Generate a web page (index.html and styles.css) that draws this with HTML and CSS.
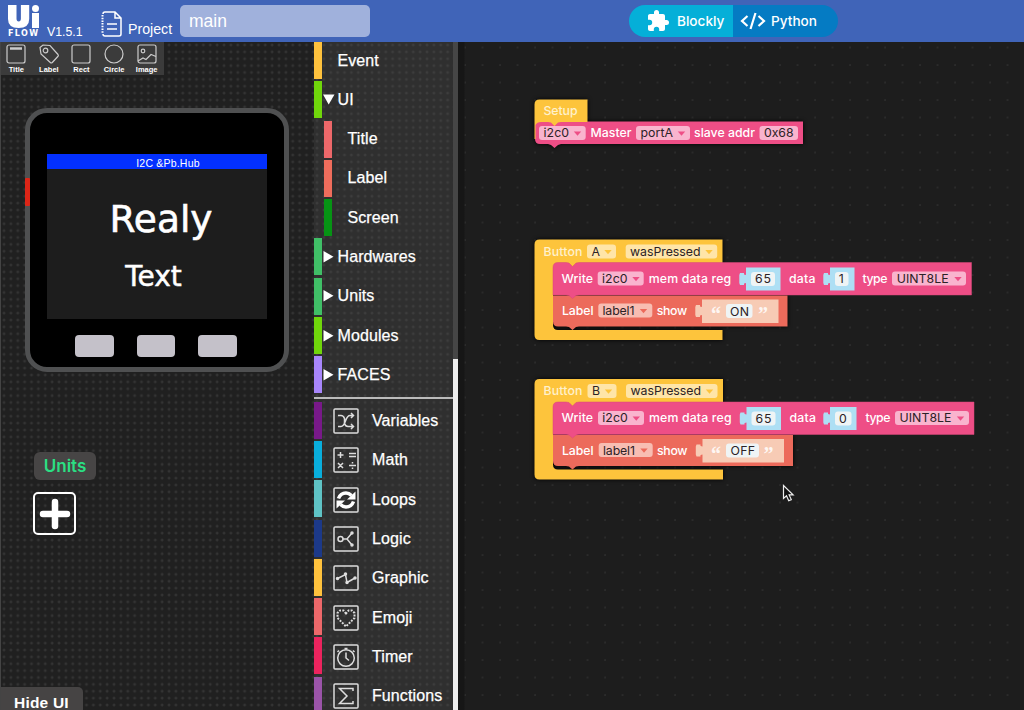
FILE: index.html
```
<!DOCTYPE html>
<html lang="en">
<head>
<meta charset="utf-8">
<title>UiFlow</title>
<link rel="stylesheet" href="styles.css">
</head>
<body>
<header class="topbar">
  <div class="logo">
    <svg class="logo-mark" width="32" height="24" viewBox="0 0 32 24" fill="#fff"><path d="M0 0h8.500v13.500q0 3 2.200 3t2.200-3V0h8.300v14q0 9-10.600 9T0 14zM24 8h7v15h-7z"/><circle cx="27.500" cy="3.500" r="3.500"/></svg>
    <span class="logo-sub">FLOW</span>
  </div>
  <span class="version">V1.5.1</span>
  <svg class="doc" width="22" height="27" viewBox="0 0 22 27" fill="none" stroke="#fff" stroke-width="1.500"><path d="M2 3q0-2 2-2h10l6 6v16q0 2-2 2H4q-2 0-2-2M14 1v6h6M6 13h10M6 18h10"/><path d="M1.500 4v19" stroke-dasharray="1.500 1.200" stroke-width="2"/></svg>
  <span class="project">Project</span>
  <div class="name">main</div>
  <div class="switch">
    <div class="mode blockly"><svg width="24" height="24" viewBox="0 0 24 24" fill="#fff"><path d="M20.500 11H19V7c0-1.100-.9-2-2-2h-4V3.500a2.500 2.500 0 0 0-5 0V5H4c-1.100 0-2 .9-2 2v3.800h1.500a2.700 2.700 0 0 1 0 5.400H2V20c0 1.100.9 2 2 2h3.800v-1.500a2.700 2.700 0 0 1 5.400 0V22H17c1.100 0 2-.9 2-2v-4h1.500a2.500 2.500 0 0 0 0-5z"/></svg><span>Blockly</span></div>
    <div class="mode python"><svg width="26" height="18" viewBox="0 0 26 18" fill="none" stroke="#fff" stroke-width="2.200"><path d="M7.500 4L2 9l5.500 5M18.500 4L24 9l-5.500 5M15.500 1l-5 16"/></svg><span>Python</span></div>
  </div>
</header>
<main class="work">
  <section class="designer">
    <nav class="tools">
      <div class="tool"><svg viewBox="0 0 20 20"><rect x="1" y="1" width="18" height="18" rx="2"/><path d="M4 4.500h12" stroke-width="2.500"/></svg>Title</div>
      <div class="tool"><svg viewBox="0 0 20 20"><path d="M1 3.500L4 1l7 .5 8 9q.8 1-.2 2l-5.500 6q-1 .9-2 0L2 10z"/><circle cx="6.500" cy="6.500" r="2.300"/></svg>Label</div>
      <div class="tool"><svg viewBox="0 0 20 20"><rect x="1" y="1" width="18" height="18" rx="2"/></svg>Rect</div>
      <div class="tool"><svg viewBox="0 0 20 20"><circle cx="10" cy="10" r="9"/></svg>Circle</div>
      <div class="tool"><svg viewBox="0 0 20 20"><rect x="1" y="1" width="18" height="18" rx="2"/><circle cx="6" cy="7" r="1.800"/><path d="M1 17l5-3 3 1.500 5-5 5 2"/></svg>Image</div>
    </nav>
    <div class="device">
      <i class="power"></i>
      <div class="screen">
        <div class="screen-title">I2C &amp;Pb.Hub</div>
        <div class="big">Realy</div>
        <div class="small">Text</div>
      </div>
      <div class="keys"><i></i><i></i><i></i></div>
    </div>
    <div class="units">Units</div>
    <div class="add"><svg width="32" height="32" viewBox="0 0 32 32" stroke="#fff" stroke-width="6.500" stroke-linecap="round"><path d="M16 4v24M4 16h24"/></svg></div>
    <div class="hide">Hide UI</div>
  </section>
  <aside class="toolbox">
    <div class="cats">
      <div class="cat"><b class="c-gold"></b><span class="arrow"></span>Event</div>
      <div class="cat"><b class="c-lime"></b><span class="arrow"><svg width="12" height="12" viewBox="0 0 12 12"><path d="M0 .5h11.500L5.700 10.500z" fill="#fff"/></svg></span>UI</div>
      <div class="cat sub"><b class="c-coral"></b><span class="arrow"></span>Title</div>
      <div class="cat sub"><b class="c-orange"></b><span class="arrow"></span>Label</div>
      <div class="cat sub"><b class="c-forest"></b><span class="arrow"></span>Screen</div>
      <div class="cat"><b class="c-green"></b><span class="arrow"><svg width="12" height="12" viewBox="0 0 12 12"><path d="M.5 0v11.500L10.500 5.700z" fill="#fff"/></svg></span>Hardwares</div>
      <div class="cat"><b class="c-green"></b><span class="arrow"><svg width="12" height="12" viewBox="0 0 12 12"><path d="M.5 0v11.500L10.500 5.700z" fill="#fff"/></svg></span>Units</div>
      <div class="cat"><b class="c-lime"></b><span class="arrow"><svg width="12" height="12" viewBox="0 0 12 12"><path d="M.5 0v11.500L10.500 5.700z" fill="#fff"/></svg></span>Modules</div>
      <div class="cat"><b class="c-violet"></b><span class="arrow"><svg width="12" height="12" viewBox="0 0 12 12"><path d="M.5 0v11.500L10.500 5.700z" fill="#fff"/></svg></span>FACES</div>
      <hr class="rule">
      <div class="cat"><b class="c-purple"></b><svg class="icon" viewBox="0 0 26 26"><rect x="1" y="1" width="24" height="24" rx="1"/><path d="M5 7.500h3q2.500 0 3.500 3v5q1 3 3.500 3h5M5 18.500h3q2.500 0 4.500-5.500t4.500-5.500h3M18 5l2.500 2.500L18 10M18 16l2.500 2.500L18 21"/></svg><span class="label">Variables</span></div>
      <div class="cat"><b class="c-cyan"></b><svg class="icon" viewBox="0 0 26 26"><rect x="1" y="1" width="24" height="24" rx="1"/><path d="M4.500 8h6M7.500 5v6M16 6.500h7M16 9.500h7M5 16l5 5M10 16l-5 5M16 18.500h7M19.500 15v1.500M19.500 20.500V22"/></svg><span class="label">Math</span></div>
      <div class="cat"><b class="c-aqua"></b><svg class="icon" viewBox="0 0 26 26"><rect x="1" y="1" width="24" height="24" rx="1"/><path d="M5.500 11.500q2-5.500 7.500-5.500 3 0 5.500 2.500M20.500 14.500q-2 5.500-7.500 5.500-3 0-5.500-2.500" stroke="#fff" stroke-width="3.500"/><path d="M22.500 4.500v8h-8.500zM3.500 21.500v-8H12z" fill="#fff" stroke="none"/></svg><span class="label">Loops</span></div>
      <div class="cat"><b class="c-navy"></b><svg class="icon" viewBox="0 0 26 26"><rect x="1" y="1" width="24" height="24" rx="1"/><circle cx="7.500" cy="13" r="2.500"/><path d="M10 13h4l5-6M14 13l5 6"/><circle cx="19" cy="7" r="1" fill="#fff"/><circle cx="19" cy="19" r="1" fill="#fff"/></svg><span class="label">Logic</span></div>
      <div class="cat"><b class="c-gold"></b><svg class="icon" viewBox="0 0 26 26"><rect x="1" y="1" width="24" height="24" rx="1"/><path d="M4.500 13.500l8-4 1.500 8 8-4.500"/><g fill="#fff"><circle cx="4.500" cy="13.500" r="1"/><circle cx="12.500" cy="9" r="1"/><circle cx="14" cy="17.500" r="1"/><circle cx="22" cy="13" r="1"/></g></svg><span class="label">Graphic</span></div>
      <div class="cat"><b class="c-coral"></b><svg class="icon" viewBox="0 0 26 26"><rect x="1" y="1" width="24" height="24" rx="1"/><path d="M13 8.500L10.500 5.500H7L4.500 8v5L13 21.500 21.500 13V8L19 5.500h-3.500z" stroke-width="2" stroke-dasharray="1.900 1.300"/></svg><span class="label">Emoji</span></div>
      <div class="cat"><b class="c-rose"></b><svg class="icon" viewBox="0 0 26 26"><rect x="1" y="1" width="24" height="24" rx="1"/><circle cx="13" cy="14" r="8.300"/><path d="M13 8.500V14l3 2.500M11.500 4.500h3M6 6.500L4.500 8M20 6.500L21.500 8"/></svg><span class="label">Timer</span></div>
      <div class="cat"><b class="c-plum"></b><svg class="icon" viewBox="0 0 26 26"><rect x="1" y="1" width="24" height="24" rx="1"/><path d="M20 8V5.500H6.500L14 13l-7.500 7.500H20V18"/></svg><span class="label">Functions</span></div>
    </div>
    <div class="scroll"><div class="thumb"></div></div>
  </aside>
  <section class="canvas">
    <svg class="blocks" width="566" height="668" viewBox="458 42 566 668">
      <defs>
        <path id="dd" d="M-3.700-2h7.400L0 2.200z"/>
      </defs>
      <g class="shade">
        <path class="pink" d="M535 121.500H803V144H561l-3 1-3.500 3-3.500-3-3-1H540q-5 0-5-5z"/>
        <path class="yellow" d="M534.500 104.500q0-5 5-5H587.500V122H561l-3 .5-3.500 3.500-3.500-3.500-3-.5h-7q-4 0-5.500 3v14h-1z"/>
      </g>
      <rect class="f-pink" x="539" y="126" width="46.700" height="14" rx="3"/>
      <rect class="f-pink" x="636" y="126" width="54" height="14" rx="3"/>
      <rect class="f-pink" x="759.500" y="126" width="38.500" height="14" rx="3"/>
      <use href="#dd" class="pink" x="577.500" y="133.500"/><use href="#dd" class="pink" x="681.500" y="133.500"/>
      <text class="pale" x="543.500" y="115.300" textLength="34">Setup</text>
      <text class="ink" x="543.500" y="137.300" textLength="25.500">i2c0</text>
      <text x="590.500" y="137.300" textLength="41">Master</text>
      <text class="ink" x="640.500" y="137.300" textLength="32.500">portA</text>
      <text x="694" y="137.300" textLength="61">slave addr</text>
      <text class="ink" x="764" y="137.300" textLength="29.500">0x68</text>

      <g class="shade">
        <path class="yellow" d="M534.500 244.500q0-5 5-5H722.500V268H553V325q0 5 5 5H722.500V340H539.500q-5 0-5-5z"/>
        <path class="red" d="M553 295.500H787.500V326.500H579l-3 .5-3.500 3-3.500-3-3-.5h-8q-5 0-5-5z"/>
      </g>
      <path class="pink edge" d="M553 267.500q0-5 5-5h8l3 .5 3.500 3.500 3.500-3.500 3-.5H971.500V295H579l-3 .5-3.500 3-3.500-3-3-.5H553z"/>
      <rect class="f-yellow" x="587" y="244.500" width="29" height="14" rx="3"/>
      <rect class="f-yellow" x="625.700" y="244.500" width="91.500" height="14" rx="3"/>
      <use href="#dd" class="yellow" x="608" y="252"/><use href="#dd" class="yellow" x="709" y="252"/>
      <rect class="f-pink" x="597.700" y="271.500" width="46" height="14" rx="3"/>
      <rect class="f-pink" x="892" y="271.500" width="74" height="14" rx="3"/>
      <use href="#dd" class="pink" x="636" y="279"/><use href="#dd" class="pink" x="958" y="279"/>
      <path class="blue" d="M746 267.500H780.500V290.500H746V283l-2 .5v1.500h-4l-.7-2v-8l.7-2h4v1.500l2 .5z"/>
      <path class="blue" d="M830 267.500H854.500V290.500H830V283l-2 .5v1.500h-4l-.7-2v-8l.7-2h4v1.500l2 .5z"/>
      <rect class="f-blue" x="751" y="272" width="24" height="14" rx="3"/>
      <rect class="f-blue" x="835" y="272" width="13.500" height="14" rx="3"/>
      <rect class="f-red" x="598.300" y="303.500" width="54" height="14" rx="3"/>
      <use href="#dd" class="red" x="643.500" y="311"/>
      <path class="peach" d="M702 299.500H778.500V323H702V315l-2 .5v1.500h-4l-.7-2v-8l.7-2h4v1.500l2 .5z"/>
      <rect class="f-blue" x="726" y="304" width="26.500" height="14" rx="3"/>
      <text class="pale" x="543.500" y="255.500" textLength="39">Button</text>
      <text class="ink" x="591.500" y="255.500">A</text>
      <text class="ink" x="630" y="255.500" textLength="70.500">wasPressed</text>
      <text x="561.500" y="282.700" textLength="31.500">Write</text>
      <text class="ink" x="602" y="282.700" textLength="25.500">i2c0</text>
      <text x="648.700" y="282.700" textLength="82.500">mem data reg</text>
      <text class="ink" x="755" y="283.300" textLength="16">65</text>
      <text x="789" y="282.700" textLength="26.500">data</text>
      <text class="ink" x="838.800" y="283.300">1</text>
      <text x="862.500" y="282.700" textLength="25">type</text>
      <text class="ink" x="896.700" y="282.700" textLength="52">UINT8LE</text>
      <text x="562" y="315" textLength="31.500">Label</text>
      <text class="ink" x="602.500" y="315" textLength="32">label1</text>
      <text x="656.700" y="315" textLength="30.500">show</text>
      <text class="quote" x="711" y="321">“</text>
      <text class="ink" x="730" y="315.500" textLength="19">ON</text>
      <text class="quote" x="758" y="321">”</text>

      <g transform="translate(0 139.500)">
        <g class="shade">
          <path class="yellow" d="M534.500 244.500q0-5 5-5H723V268H553V325q0 5 5 5H723V340H539.500q-5 0-5-5z"/>
          <path class="red" d="M553 295.500H793V326.500H579l-3 .5-3.500 3-3.500-3-3-.5h-8q-5 0-5-5z"/>
        </g>
        <path class="pink edge" d="M553 267.500q0-5 5-5h8l3 .5 3.500 3.500 3.500-3.500 3-.5H974V295H579l-3 .5-3.500 3-3.500-3-3-.5H553z"/>
        <rect class="f-yellow" x="587.500" y="244.500" width="29" height="14" rx="3"/>
        <rect class="f-yellow" x="626" y="244.500" width="91.500" height="14" rx="3"/>
        <use href="#dd" class="yellow" x="608.500" y="252"/><use href="#dd" class="yellow" x="709.500" y="252"/>
        <rect class="f-pink" x="598" y="271.500" width="46" height="14" rx="3"/>
        <rect class="f-pink" x="895" y="271.500" width="74" height="14" rx="3"/>
        <use href="#dd" class="pink" x="636.300" y="279"/><use href="#dd" class="pink" x="960.500" y="279"/>
        <path class="blue" d="M746.500 267.500H781V290.500H746.500V283l-2 .5v1.500h-4l-.7-2v-8l.7-2h4v1.500l2 .5z"/>
        <path class="blue" d="M830 267.500H856.500V290.500H830V283l-2 .5v1.500h-4l-.7-2v-8l.7-2h4v1.500l2 .5z"/>
        <rect class="f-blue" x="751.500" y="272" width="24" height="14" rx="3"/>
        <rect class="f-blue" x="835" y="272" width="16.500" height="14" rx="3"/>
        <rect class="f-red" x="598.700" y="303.500" width="54" height="14" rx="3"/>
        <use href="#dd" class="red" x="644" y="311"/>
        <path class="peach" d="M702.500 299.500H784V323H702.500V315l-2 .5v1.500h-4l-.7-2v-8l.7-2h4v1.500l2 .5z"/>
        <rect class="f-blue" x="726" y="304" width="33" height="14" rx="3"/>
        <text class="pale" x="543.500" y="255.500" textLength="39">Button</text>
        <text class="ink" x="592" y="255.500">B</text>
        <text class="ink" x="630.500" y="255.500" textLength="70.500">wasPressed</text>
        <text x="561.500" y="282.700" textLength="31.500">Write</text>
        <text class="ink" x="602.300" y="282.700" textLength="25.500">i2c0</text>
        <text x="649" y="282.700" textLength="82.500">mem data reg</text>
        <text class="ink" x="755.500" y="283.300" textLength="16">65</text>
        <text x="789.500" y="282.700" textLength="26.500">data</text>
        <text class="ink" x="839" y="283.300">0</text>
        <text x="865.500" y="282.700" textLength="25">type</text>
        <text class="ink" x="899.500" y="282.700" textLength="52">UINT8LE</text>
        <text x="562" y="315" textLength="31.500">Label</text>
        <text class="ink" x="603" y="315" textLength="32">label1</text>
        <text x="657" y="315" textLength="30.500">show</text>
        <text class="quote" x="711" y="321">“</text>
        <text class="ink" x="730.500" y="315.500" textLength="24.500">OFF</text>
        <text class="quote" x="763.500" y="321">”</text>
      </g>
      <path d="M783.500 485.500v13l3-2.700 2.200 5 2.600-1.200-2.200-4.700h4z" fill="#111" stroke="#eee" stroke-width="1.200"/>
    </svg>
  </section>
</main>
</body>
</html>
```
FILE: styles.css
```
* { box-sizing: border-box; }
body { margin: 0; width: 1024px; height: 710px; overflow: hidden; background: #1d1d1d; color: #fff; font-family: "Liberation Sans", Arial, sans-serif; display: flex; flex-direction: column; }
svg { display: block; flex: none; }

.topbar { height: 42px; flex: none; background: #4064b8; display: flex; align-items: flex-start; padding-left: 8px; }
.logo { width: 32px; padding-top: 5px; }
.logo-sub { display: block; font: bold 8px/8px "DejaVu Sans", sans-serif; letter-spacing: 1.400px; margin-top: 1px; white-space: nowrap; }
.version { margin: 25px 0 0 7px; width: 36px; font-size: 12.300px; line-height: 14px; white-space: nowrap; }
.doc { margin: 11px 0 0 18px; }
.project { margin: 20px 0 0 5px; width: 44px; font-size: 14.200px; line-height: 18px; white-space: nowrap; }
.name { margin: 5px 0 0 8px; width: 190px; height: 32px; border-radius: 5px; background: #a0b1dc; font-size: 17.500px; line-height: 32px; padding-left: 9px; }
.switch { margin: 5px 0 0 259px; display: flex; height: 32px; width: 209px; border-radius: 16px; overflow: hidden; font: 500 13.600px/32px Inter, sans-serif; }
.mode { display: flex; align-items: center; }
.blockly { width: 104px; background: #05afd8; padding-left: 17px; gap: 7px; }
.python { width: 105px; background: #057bc3; padding-left: 7px; gap: 5px; }

.work { flex: 1; display: flex; min-height: 0; }
.designer { width: 314px; border-left: 1px solid #444;
  background: linear-gradient(#2f2f2f, #2f2f2f) 2px 4px / 6.880px 6.880px,
    #202020;
  background:
    radial-gradient(circle at 3px 3px, #3b3b3b 0, #303030 1px, transparent 1.900px) 0 0 / 6.880px 6.880px, #202020; }
.tools { display: flex; width: 163px; height: 33px; background: #3b3b3b; }
.tool { width: 32.700px; display: flex; flex-direction: column; align-items: center; font: bold 7.500px/9px "Liberation Sans", sans-serif; padding: 2px 2px 0 0; }
.tool svg { width: 20px; height: 20px; fill: none; stroke: #ccc; stroke-width: 1.200; margin-bottom: 1px; }
.device { position: relative; margin: 33px 0 0 24px; width: 264px; height: 264px; border: 5px solid #4f5051; border-radius: 22px; background: #000; padding: 41px 17px 0; }
.power { position: absolute; left: -5px; top: 65px; width: 5px; height: 28px; background: #dc2517; border-radius: 1px; }
.screen { width: 220px; height: 165px; background: #1d1d1d; text-align: center; font-family: "DejaVu Sans", sans-serif; }
.screen-title { height: 15px; background: #0330ff; font: 10.500px/18px "Liberation Sans", sans-serif; letter-spacing: .2px; padding-left: 22px; }
.big { margin-top: 27px; font-size: 37.500px; line-height: 46px; padding-left: 8px; -webkit-text-stroke: .6px #fff; }
.small { margin-top: 17px; font-size: 28px; line-height: 36px; padding-right: 7px; -webkit-text-stroke: .5px #fff; }
.keys { display: flex; gap: 23px; padding: 16px 0 0 28px; }
.keys i { width: 38.500px; height: 22px; border-radius: 4px; background: #c4c1c9; }
.units { margin: 80px 0 0 33px; width: 62px; height: 28px; border-radius: 6px; background: #474545; color: #2bdf83; font: 600 17px/28px Inter, sans-serif; text-align: center; }
.add { margin: 12px 0 0 32px; width: 43px; height: 43px; border: 2px solid #fff; border-radius: 5px; display: flex; align-items: center; justify-content: center; }
.hide { margin-top: 152px; height: 24px; width: 82px; background: #464444; border-radius: 0 5px 0 0; font: bold 15.500px/32px "Liberation Sans", sans-serif; padding-left: 13px; letter-spacing: .2px; }

.toolbox { width: 144px; display: flex; background: #2f2f2f; }
.cats { width: 139px; overflow: hidden; background: radial-gradient(circle at 3px 3px, #434343 0, #3a3a3a 1px, transparent 1.900px) 0 0 / 6.880px 6.880px; }
.cat { height: 39.300px; display: flex; align-items: center; font-size: 16px; padding-bottom: 2.300px; letter-spacing: .1px; white-space: nowrap; -webkit-text-stroke: .25px #fff; }
.cat b { width: 7.500px; height: 37px; flex: none; }
.cat .arrow { width: 12px; margin: 0 2.500px 0 1.500px; }
.cat.sub { padding-left: 10px; }
.icon { width: 26px; height: 26px; margin: 2px 13.500px 0 11px; fill: none; stroke: #ddd; stroke-width: 1.500; }
.label { padding-top: 2px; }
.rule { border: 0; height: 1.500px; background: #bbb; margin: 1.500px 0 3px; }
.scroll { width: 5px; background: #464646; padding-top: 317px; }
.thumb { height: 100%; background: #eee; }
.c-gold { background: #ffc23d; } .c-lime { background: #70d60b; } .c-coral { background: #ed686a; } .c-orange { background: #ef6d5c; }
.c-forest { background: #069414; } .c-green { background: #40bf67; } .c-violet { background: #a886fb; } .c-purple { background: #781989; }
.c-cyan { background: #09aedc; } .c-aqua { background: #5fc3c5; } .c-navy { background: #1c3989; } .c-rose { background: #ec245e; } .c-plum { background: #9b54a9; }

.canvas { flex: 1; background: linear-gradient(90deg, #161616 6px, transparent 7px), linear-gradient(#484848, #484848) 0 0 / 0 0 no-repeat, radial-gradient(circle at 1px 1px, #444 0, #3c3c3c .4px, transparent .900px) 6px 4.500px / 17.500px 17.500px #1d1d1d; }
.blocks text { font: 500 12.300px Inter, sans-serif; fill: #fff; }
.blocks text.ink { fill: #2b2226; font-weight: 400; }
.blocks text.pale { fill: #fff1cc; }
.blocks text.quote { font: bold 20px "Liberation Serif", serif; fill: #fff; fill-opacity: .85; }
.shade { filter: drop-shadow(0 0 2px #000); }
.yellow { fill: #fdc43c; } .pink { fill: #ee4e86; } .red { fill: #ec6a5b; } .blue { fill: #aedff4; } .peach { fill: #f7cbb5; }
.edge { stroke: #d8487a; stroke-width: .5; }
.f-yellow { fill: #ffe5a8; } .f-pink { fill: #f9b4ce; } .f-red { fill: #f8bdb2; } .f-blue { fill: #eff4f5; }
```
